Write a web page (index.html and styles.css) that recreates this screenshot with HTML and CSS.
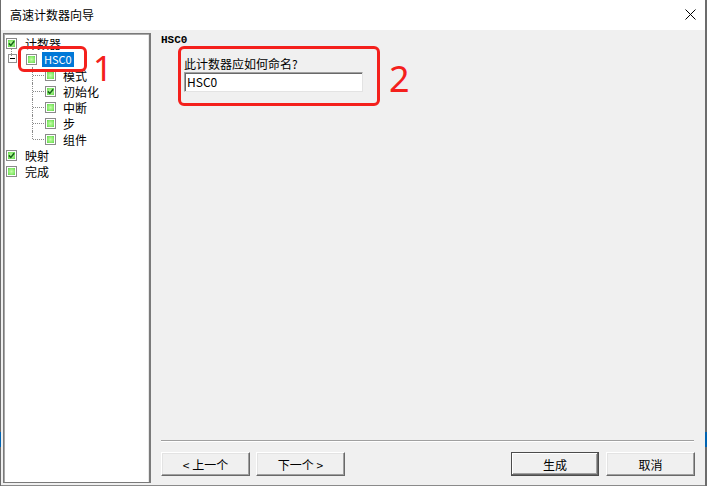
FILE: index.html
```html
<!DOCTYPE html>
<html lang="zh-CN">
<head>
  <meta charset="UTF-8">
  <title>高速计数器向导</title>
  <link rel="stylesheet" href="styles.css">
</head>
<body>

<div class="wz-window">
  <div class="wz-titlebar">
    <span class="wz-title">高速计数器向导</span>
    <svg class="wz-close" width="11" height="11" viewBox="0 0 11 11">
      <path d="M0.5 0.5L10.5 10.5M10.5 0.5L0.5 10.5" stroke="#000" stroke-width="1" fill="none"/>
    </svg>
  </div>

  <div class="wz-main">
    <div class="wz-tree">
      <div class="wz-node lv0">
        <span class="wz-cb on root"><svg width="7" height="7" viewBox="0 0 7 7"><path d="M0.8 3.4L2.8 5.4L6.2 1.2" stroke="#17651a" stroke-width="1.6" fill="none"/></svg></span>
        <span class="wz-label">计数器</span>
      </div>
      <div class="wz-node lv1">
        <span class="wz-expand"></span>
        <span class="wz-cb"></span>
        <span class="wz-label sel">HSC0</span>
      </div>
      <div class="wz-node lv2">
        <span class="wz-branch"></span>
        <span class="wz-cb"></span>
        <span class="wz-label">模式</span>
      </div>
      <div class="wz-node lv2">
        <span class="wz-branch"></span>
        <span class="wz-cb on"><svg width="7" height="7" viewBox="0 0 7 7"><path d="M0.8 3.4L2.8 5.4L6.2 1.2" stroke="#17651a" stroke-width="1.6" fill="none"/></svg></span>
        <span class="wz-label">初始化</span>
      </div>
      <div class="wz-node lv2">
        <span class="wz-branch"></span>
        <span class="wz-cb"></span>
        <span class="wz-label">中断</span>
      </div>
      <div class="wz-node lv2">
        <span class="wz-branch"></span>
        <span class="wz-cb"></span>
        <span class="wz-label">步</span>
      </div>
      <div class="wz-node lv2">
        <span class="wz-branch last"></span>
        <span class="wz-cb"></span>
        <span class="wz-label">组件</span>
      </div>
      <div class="wz-node lv0">
        <span class="wz-cb on"><svg width="7" height="7" viewBox="0 0 7 7"><path d="M0.8 3.4L2.8 5.4L6.2 1.2" stroke="#17651a" stroke-width="1.6" fill="none"/></svg></span>
        <span class="wz-label">映射</span>
      </div>
      <div class="wz-node lv0">
        <span class="wz-cb"></span>
        <span class="wz-label">完成</span>
      </div>
    </div>

    <div class="wz-page">
      <div class="wz-page-title">HSC0</div>
      <div class="wz-field">
        <div class="wz-field-label">此计数器应如何命名?</div>
        <div class="wz-input">HSC0</div>
      </div>
      <div class="wz-spacer"></div>
      <div class="wz-sep"></div>
      <div class="wz-buttons">
        <button class="wz-btn">&lt; 上一个</button>
        <button class="wz-btn">下一个 &gt;</button>
        <button class="wz-btn default push">生成</button>
        <button class="wz-btn">取消</button>
      </div>
    </div>
  </div>
</div>

<div class="wz-mark mark1"></div>
<div class="wz-num num1">1</div>
<div class="wz-mark mark2"></div>
<div class="wz-num num2">2</div>

</body>
</html>
```

FILE: styles.css
```css
body {
  margin: 0;
  width: 707px;
  height: 486px;
  overflow: hidden;
  position: relative;
  font-family: "Noto Sans CJK SC", "Liberation Sans", sans-serif;
  font-size: 12px;
  color: #000;
  background: linear-gradient(to bottom, #6c6c6c 0, #6c6c6c 432px, #0063b1 432px, #0063b1 447px, #6c6c6c 447px);
}

.wz-window {
  width: 704px;
  height: 486px;
  margin-left: 1px;
  display: flex;
  flex-direction: column;
  background-color: #f0f0f0;
  box-sizing: border-box;
  border-bottom: 1px solid #8a8a8a;
}

.wz-titlebar {
  height: 30px;
  flex: none;
  display: flex;
  align-items: center;
  padding-left: 9px;
  background-color: #fff;
}

.wz-title {
  font-size: 12px;
  line-height: 16px;
}

.wz-close {
  margin-left: auto;
  margin-right: 9px;
  margin-top: -1px;
}

.wz-main {
  flex: 1;
  display: flex;
  padding: 3px 0 2px 2px;
  min-height: 0;
}

.wz-tree {
  width: 148px;
  flex: none;
  box-sizing: border-box;
  padding-top: 1px;
  background-color: #fff;
  border: 1px solid #7a7a7a;
  border-right-width: 2px;
  box-shadow: inset 1px 1px 0 #a8a8a8, inset -1px 0 0 #e8e8e8;
}

.wz-node {
  height: 16px;
  display: flex;
  align-items: center;
  white-space: nowrap;
}

.wz-node.lv0 { padding-left: 2px; }
.wz-node.lv1 { padding-left: 4px; }
.wz-node.lv2 { padding-left: 28px; }

.wz-cb {
  width: 11px;
  height: 11px;
  flex: none;
  box-sizing: border-box;
  position: relative;
  display: flex;
  align-items: center;
  justify-content: center;
  border: 1px solid #8a8a8a;
  background: radial-gradient(circle, #c4ffa8 0, #86e86a 50%, #38c02c 100%);
  box-shadow: inset 0 0 0 1px #fff;
}

.wz-cb.root::after {
  content: "";
  position: absolute;
  left: 4px;
  top: 10px;
  height: 7px;
  border-left: 1px dotted #8a8a8a;
}

.wz-label {
  margin-left: 8px;
  line-height: 15px;
}

.lv1 .wz-cb { margin-left: 9px; }
.lv1 .wz-label { margin-left: 5px; }
.lv2 .wz-label { margin-left: 7px; }

.wz-label.sel {
  background-color: #0078d7;
  color: #fff;
  padding: 0 2px;
  font-size: 11px;
  height: 15px;
  margin-top: 1px;
}

.wz-expand {
  width: 9px;
  height: 9px;
  flex: none;
  box-sizing: border-box;
  border: 1px solid #919191;
  background-color: #fff;
  display: flex;
  align-items: center;
  justify-content: center;
  margin-top: -1px;
}

.wz-expand::before {
  content: "";
  width: 5px;
  height: 1px;
  background-color: #000;
}

.wz-branch {
  width: 13px;
  height: 16px;
  flex: none;
  position: relative;
}

.wz-branch::before {
  content: "";
  position: absolute;
  left: 0;
  top: 0;
  bottom: 0;
  border-left: 1px dotted #8a8a8a;
}

.wz-branch.last::before {
  bottom: 8px;
}

.wz-branch::after {
  content: "";
  position: absolute;
  left: 1px;
  top: 8px;
  width: 11px;
  border-top: 1px dotted #8a8a8a;
}

.wz-page {
  flex: 1;
  display: flex;
  flex-direction: column;
  padding: 0 10px 7px 10px;
}

.wz-page-title {
  font-family: "Liberation Mono", monospace;
  font-weight: bold;
  font-size: 11px;
  line-height: 14px;
  margin-top: 0;
}

.wz-field {
  margin-top: 9px;
  margin-left: 23px;
}

.wz-field-label {
  line-height: 16px;
}

.wz-input {
  width: 179px;
  height: 20px;
  box-sizing: border-box;
  padding-left: 2px;
  line-height: 17px;
  background-color: #fff;
  border: 1px solid;
  border-color: #a0a0a0 #e3e3e3 #e3e3e3 #a0a0a0;
  box-shadow: inset 1px 1px 0 #696969;
}

.wz-spacer {
  flex: 1;
}

.wz-sep {
  height: 1px;
  margin-right: 1px;
  background-color: #a0a0a0;
  border-bottom: 1px solid #fff;
}

.wz-buttons {
  display: flex;
  gap: 6px;
  margin-top: 10px;
}

.wz-btn {
  width: 89px;
  height: 24px;
  padding: 0;
  font-family: "Noto Sans CJK SC", "Liberation Sans", sans-serif;
  font-size: 12px;
  color: #000;
  background-color: #f0f0f0;
  border: 1px solid;
  border-color: #fff #696969 #696969 #fff;
  box-shadow: inset -1px -1px 0 #a0a0a0, inset 1px 1px 0 #e3e3e3;
}

.wz-btn.push {
  margin-left: auto;
}

.wz-btn.default {
  width: 88px;
  margin-right: 1px;
  border-color: #4c4c4c;
  box-shadow: inset -1px -1px 0 #696969, inset 1px 1px 0 #fff, inset -2px -2px 0 #a0a0a0;
}

.wz-mark {
  position: absolute;
  box-sizing: border-box;
  border: 3px solid #f4201c;
  border-radius: 6px;
}

.mark1 {
  left: 18px;
  top: 46px;
  width: 69px;
  height: 26px;
}

.mark2 {
  left: 178px;
  top: 46px;
  width: 202px;
  height: 60px;
}

.wz-num {
  position: absolute;
  font-family: "Noto Sans", sans-serif;
  color: #f4201c;
}

.num1 {
  left: 93px;
  top: 51px;
  font-size: 34px;
  line-height: 34px;
}

.num2 {
  left: 389px;
  top: 61px;
  font-size: 36px;
  line-height: 36px;
}
```
